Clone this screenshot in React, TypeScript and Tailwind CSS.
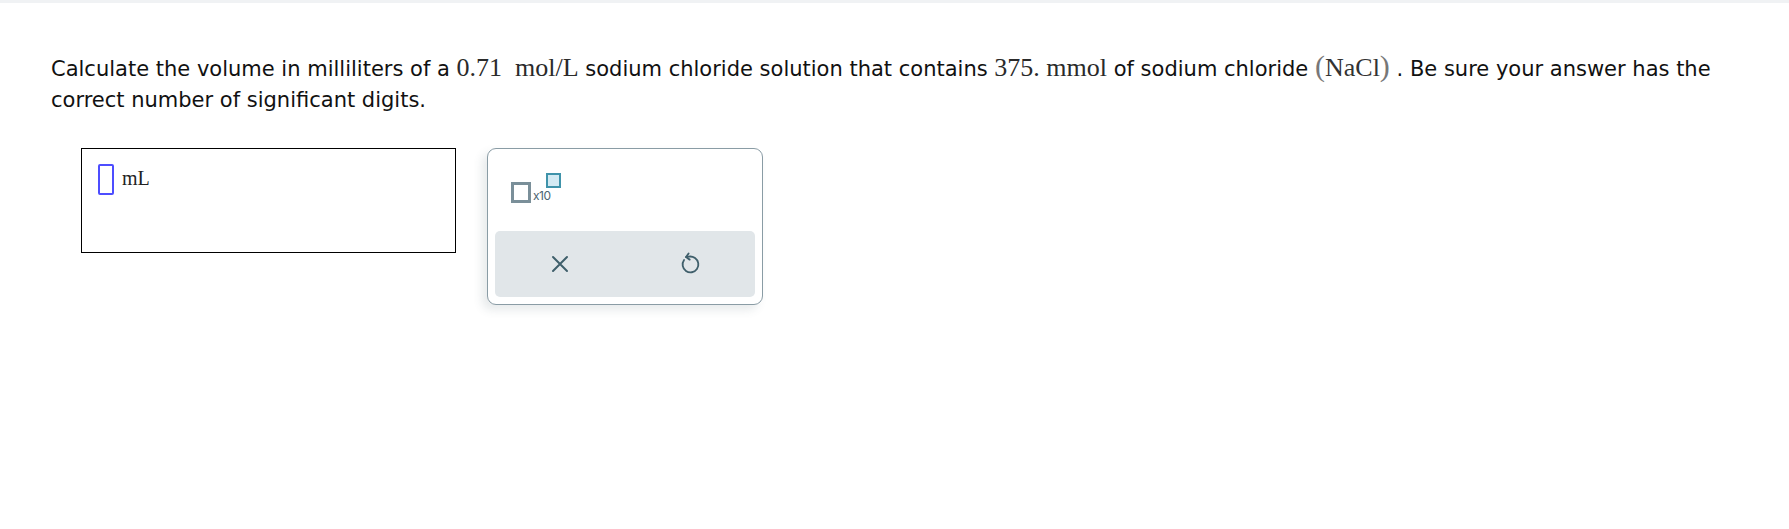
import React from "react";
import { RotateCcw } from "lucide-react";

export default function App() {
  const serif = "font-['Liberation_Serif','Times_New_Roman',serif]";
  return (
    <div className="min-h-[529px] w-full bg-white">
      <div className="h-[3px] bg-[#f0f2f4]" />
      <div className="pl-[51px] pt-[47px]">
        <p className="font-['DejaVu_Sans','Verdana',sans-serif] text-[21px] leading-[31px] text-[#111] pr-[20px]">
          Calculate the volume in milliliters of a{" "}
          <span className={`${serif} text-[26px] leading-[31px] text-[#2a2a2a]`}>0.71&nbsp; mol/L</span>{" "}
          sodium chloride solution that contains{" "}
          <span className={`${serif} text-[26px] leading-[31px] text-[#2a2a2a]`}>375. mmol</span>{" "}
          of sodium chloride{" "}
          <span className={`${serif} text-[26px] leading-[31px] text-[#333]`}>
            <span className="text-[30px] leading-[31px] text-[#777]">(</span>NaCl<span className="text-[30px] leading-[31px] text-[#777]">)</span>
          </span>{" "}
          . Be sure your answer has the correct number of significant digits.
        </p>
        <div className="mt-[32px] flex items-start pl-[30px]">
          <div className="w-[375px] h-[105px] border border-black flex items-start pt-[15px] pl-[16px]">
            <div className="w-[16px] h-[31px] border-2 border-[#4d4dff] rounded-[2px]" />
            <span className={`${serif} text-[20px] text-[#222] ml-[8px] mt-[2px] leading-[24px]`}>mL</span>
          </div>
          <div className="ml-[31px] w-[276px] h-[157px] border border-[#8a9ca5] rounded-[9px] bg-white shadow-[-5px_5px_10px_rgba(60,80,90,0.12)] flex flex-col px-[7px] pb-[7px]">
            <div className="flex-1 relative">
              <div className="absolute left-[16px] top-[33px] w-[20px] h-[21px] border-[3px] border-[#7a8f99] bg-white" />
              <span className="absolute left-[38px] top-[40px] font-['Inter','Liberation_Sans',sans-serif] text-[12px] leading-[14px] text-[#4b6470] tracking-[-0.5px]">x10</span>
              <div className="absolute left-[51px] top-[24px] w-[15px] h-[15px] border-[2.5px] border-[#3f93aa] bg-[#d3eaf3]" />
            </div>
            <div className="h-[66px] bg-[#e1e6e9] rounded-[5px] flex">
              <div className="flex-1 flex items-center justify-center">
                <svg width="20" height="20" viewBox="0 0 20 20" fill="none" stroke="#3f5f6b" strokeWidth="2" strokeLinecap="round">
                  <path d="M3 3 L17 17 M17 3 L3 17" />
                </svg>
              </div>
              <div className="flex-1 flex items-center justify-center">
                <RotateCcw size={21} color="#3f5f6b" strokeWidth={2.1} className="rotate-[35deg]" />
              </div>
            </div>
          </div>
        </div>
      </div>
    </div>
  );
}
